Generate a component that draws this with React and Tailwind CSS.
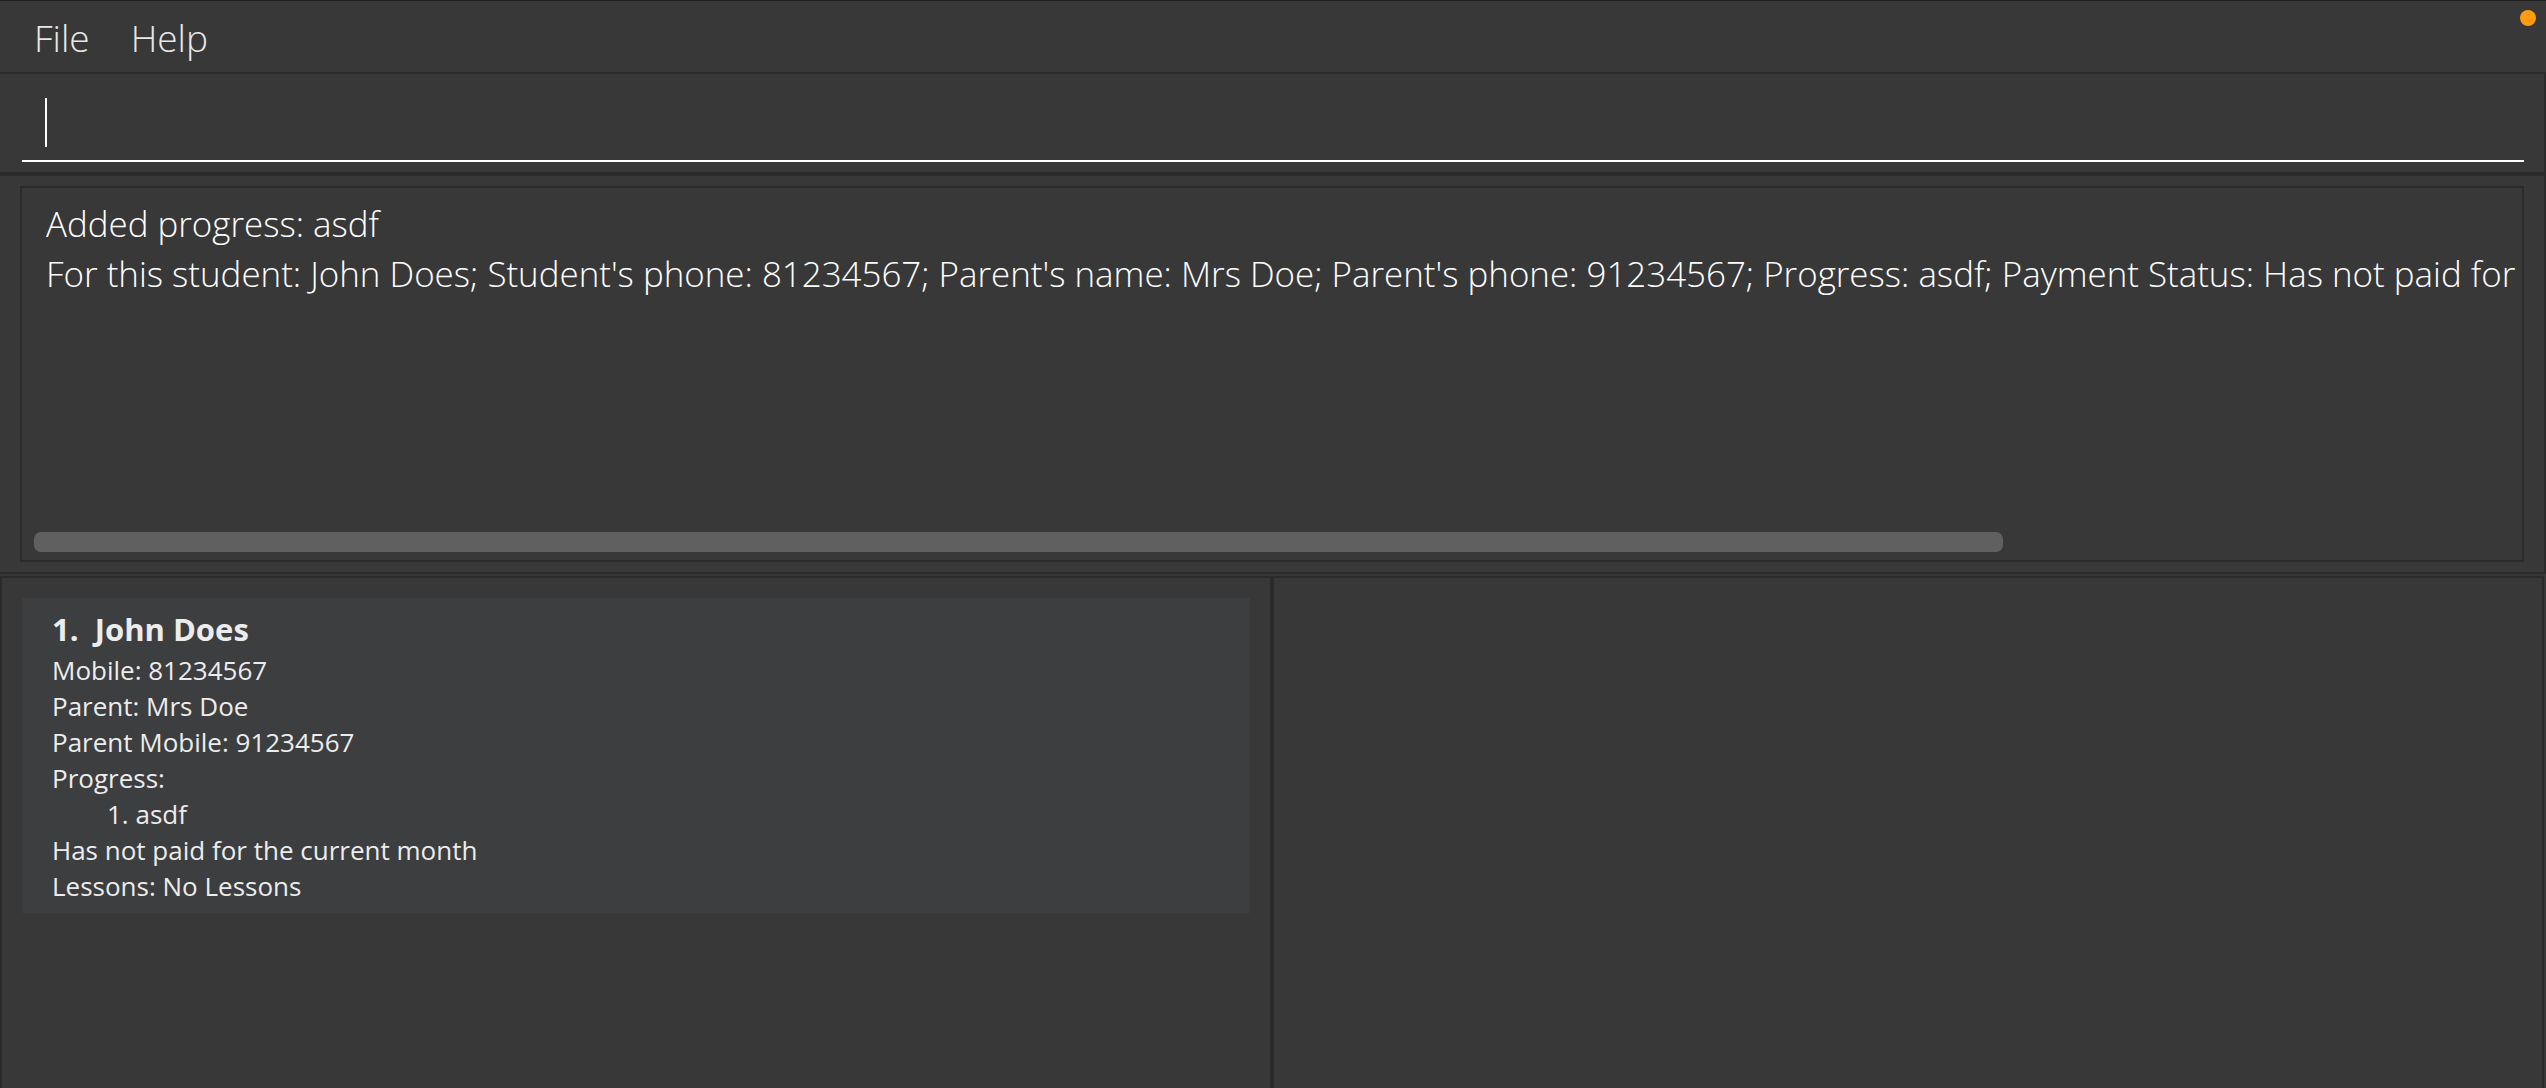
export default function App() {
  const message = [
    "Added progress: asdf",
    "For this student: John Does; Student's phone: 81234567; Parent's name: Mrs Doe; Parent's phone: 91234567; Progress: asdf; Payment Status: Has not paid for the current month; Lessons: No Lessons",
  ];

  return (
    <div
      className="w-[2546px] h-[1088px] overflow-hidden bg-[#383838] flex flex-col border-t border-[#1e1e1e] text-white"
      style={{ fontFamily: '"Open Sans", "Noto Sans", sans-serif' }}
    >
      {/* menu bar */}
      <div className="relative h-[71px] shrink-0 flex pl-[34px] pt-[18px] gap-[41px] text-[37px] leading-none font-light text-[#e8e8e8]">
        <span>File</span>
        <span>Help</span>
        <span className="absolute left-[2520px] top-[9px] w-[16px] h-[16px] rounded-full bg-[#ff9c0f]" />
      </div>
      <div className="h-[2px] shrink-0 bg-[#2b2b2b]" />

      {/* command box */}
      <div className="h-[98px] shrink-0 border-r-2 border-[#2b2b2b] pl-[22px] pr-[20px] flex flex-col">
        <div className="h-[86px] pl-[23px] pt-[24px]">
          <div className="w-[2px] h-[49px] bg-white" />
        </div>
        <div className="h-[2px] bg-white" />
      </div>
      <div className="h-[4px] shrink-0 bg-[#2b2b2b]" />

      {/* result display */}
      <div className="h-[396px] shrink-0 border-r-2 border-[#2b2b2b] pt-[10px] pb-[10px] pl-[20px] pr-[20px]">
        <div className="h-full border-2 border-[#2b2b2b] flex flex-col">
          <div className="flex-1 overflow-hidden whitespace-nowrap pl-[24px] pt-[11px] text-[34.9px] leading-[50px] font-light text-white">
            {message.map((line) => (
              <div key={line}>{line}</div>
            ))}
          </div>
          <div className="h-[20px] ml-[12px] mb-[8px]">
            <div className="w-[1969px] h-full rounded-[7px] bg-[#606060]" />
          </div>
        </div>
      </div>
      <div className="h-[2px] shrink-0 bg-[#2b2b2b]" />
      <div className="h-[2px] shrink-0" />

      {/* lower panels */}
      <div className="flex-1 flex pr-[2px]">
        <div className="w-[1272px] border-2 border-b-0 border-[#2b2b2b] px-[20px] pt-[20px]">
          <div className="bg-[#3c3e3f] pl-[30px] pt-[13px] pb-[9px] text-[#ececec]">
            <div className="text-[31px] leading-[36px] font-bold">
              1.&nbsp;&nbsp;John Does
            </div>
            <div className="mt-[5px] text-[26px] leading-[36px]">
              <div>Mobile: 81234567</div>
              <div>Parent: Mrs Doe</div>
              <div>Parent Mobile: 91234567</div>
              <div>Progress:</div>
              <div className="pl-[55px]">1. asdf</div>
              <div>Has not paid for the current month</div>
              <div>Lessons: No Lessons</div>
            </div>
          </div>
        </div>
        <div className="w-[1272px] border-2 border-b-0 border-[#2b2b2b]" />
      </div>
    </div>
  );
}
